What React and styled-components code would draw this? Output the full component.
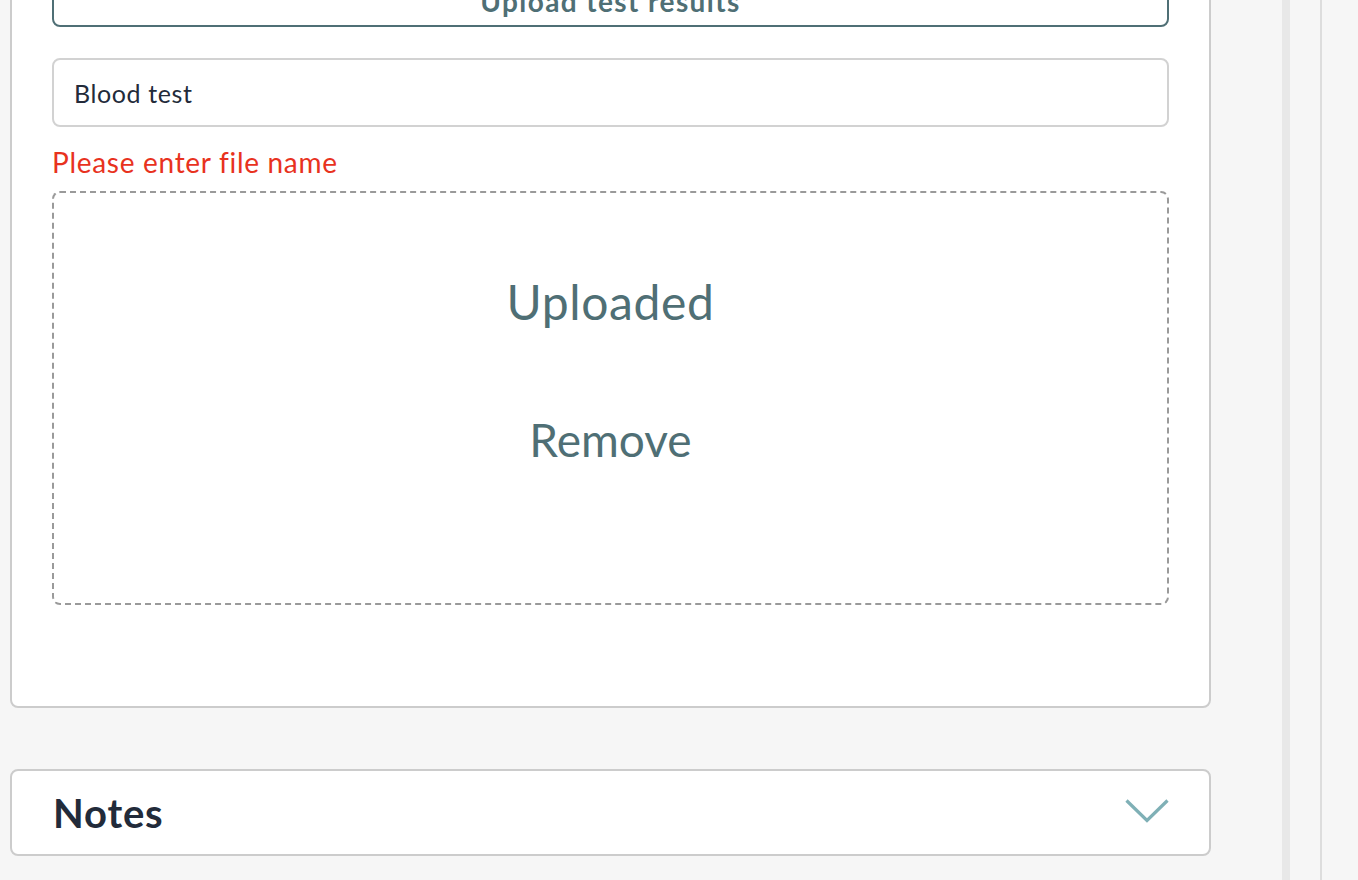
import React from 'react'
import styled, { createGlobalStyle } from 'styled-components'

const GlobalStyle = createGlobalStyle`
  html, body {
    margin: 0;
    padding: 0;
    background: #f6f6f6;
    overflow: hidden;
  }
  * {
    box-sizing: border-box;
  }
  body {
    font-family: Lato, "Open Sans", sans-serif;
  }
`

const ChevronDown = () => (
  <svg width='44' height='24' viewBox='0 0 44 24' fill='none'>
    <path d='M1.5 1.5 L22 21.5 L42.5 1.5' stroke='#7fb0b6' strokeWidth='3.2' />
  </svg>
)

const App = () => {
  return (
    <>
      <GlobalStyle />
      <Page>
        <Main>
          <Card>
            <OutlineButton>Upload test results</OutlineButton>
            <TextInput defaultValue='Blood test' />
            <ErrorText>Please enter file name</ErrorText>
            <DropZone>
              <DropTitle>Uploaded</DropTitle>
              <DropAction>Remove</DropAction>
            </DropZone>
          </Card>
          <Collapsible>
            <CollapsibleTitle>Notes</CollapsibleTitle>
            <ChevronWrap>
              <ChevronDown />
            </ChevronWrap>
          </Collapsible>
        </Main>
        <ScrollTrack />
        <SidePanel />
      </Page>
    </>
  )
}

const Page = styled('div')`
  display: flex;
  height: 880px;
  overflow: hidden;
`

const Main = styled('main')`
  width: 1282px;
  flex: none;
  padding: 0 71px 0 10px;
  display: flex;
  flex-direction: column;
`

const Card = styled('section')`
  margin-top: -60px;
  background: #fff;
  border: 2px solid #cccccc;
  border-radius: 8px;
  padding: 29px 40px 101px;
  display: flex;
  flex-direction: column;
`

const OutlineButton = styled('button')`
  height: 56px;
  padding: 4px 0 0;
  background: #fff;
  border: 2px solid #4f6f75;
  border-radius: 8px;
  color: #4f6f75;
  font-family: inherit;
  font-size: 28px;
  font-weight: 700;
  letter-spacing: 1.4px;
`

const TextInput = styled('input')`
  margin-top: 31px;
  height: 69px;
  border: 2px solid #d2d2d2;
  border-radius: 8px;
  padding: 0 20px;
  font-family: inherit;
  font-size: 25px;
  letter-spacing: 0.6px;
  color: #232b3a;
  outline: none;
`

const ErrorText = styled('div')`
  margin-top: 18px;
  line-height: 34px;
  font-size: 28px;
  letter-spacing: 0.7px;
  color: #e8321e;
`

const DropZone = styled('div')`
  margin-top: 12px;
  height: 414px;
  border: 2px dashed #9a9a9a;
  border-radius: 8px;
  display: flex;
  flex-direction: column;
  align-items: center;
  padding-top: 79px;
  color: #4f6f75;
`

const DropTitle = styled('div')`
  font-size: 48px;
  line-height: 60px;
  letter-spacing: 0.6px;
`

const DropAction = styled('div')`
  margin-top: 78px;
  font-size: 46px;
  line-height: 60px;
  cursor: pointer;
`

const Collapsible = styled('section')`
  margin-top: 61px;
  height: 87px;
  background: #fff;
  border: 2px solid #cccccc;
  border-radius: 8px;
  padding: 0 40px 0 41px;
  display: flex;
  align-items: center;
  justify-content: space-between;
`

const CollapsibleTitle = styled('h2')`
  margin: 0;
  font-size: 40px;
  font-weight: 700;
  letter-spacing: 0.8px;
  color: #222b3a;
`

const ChevronWrap = styled('span')`
  display: flex;
  margin-top: -4px;
`

const ScrollTrack = styled('div')`
  width: 8px;
  flex: none;
  background: #e8e8e8;
`

const SidePanel = styled('aside')`
  flex: 1;
  margin-left: 30px;
  border-left: 2px solid #dddddd;
  background: #f6f6f6;
`

export default App
